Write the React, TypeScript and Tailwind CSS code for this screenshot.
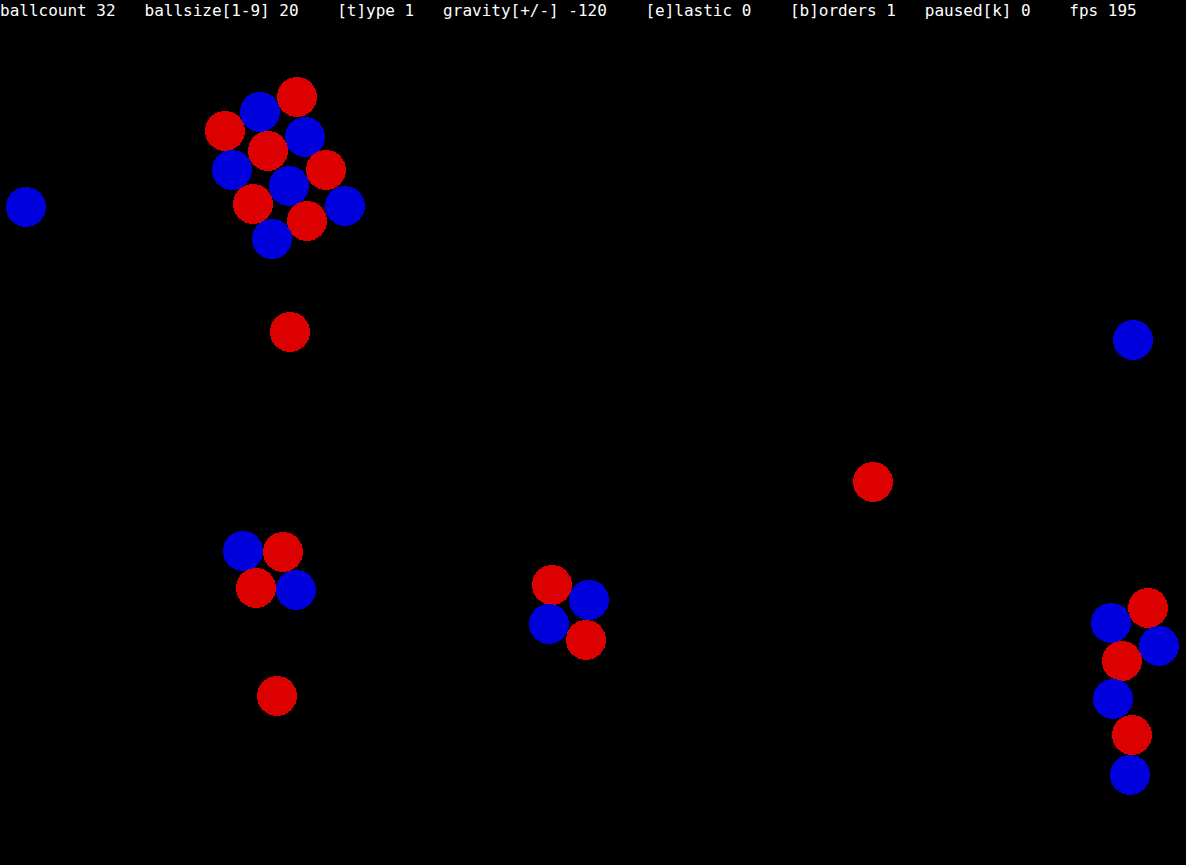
const RED = "#dd0000";
const BLUE = "#0000dd";

type Ball = { x: number; y: number; c: string };

const balls: Ball[] = [
  // top cluster
  { x: 297, y: 97, c: RED },
  { x: 260, y: 112, c: BLUE },
  { x: 225, y: 131, c: RED },
  { x: 305, y: 137, c: BLUE },
  { x: 268, y: 151, c: RED },
  { x: 232, y: 170, c: BLUE },
  { x: 326, y: 170, c: RED },
  { x: 289, y: 186, c: BLUE },
  { x: 253, y: 204, c: RED },
  { x: 345, y: 206, c: BLUE },
  { x: 307, y: 221, c: RED },
  { x: 272, y: 239, c: BLUE },
  // singles
  { x: 26, y: 207, c: BLUE },
  { x: 290, y: 332, c: RED },
  { x: 1133, y: 340, c: BLUE },
  { x: 873, y: 482, c: RED },
  { x: 277, y: 696, c: RED },
  // bottom left
  { x: 243, y: 551, c: BLUE },
  { x: 283, y: 552, c: RED },
  { x: 256, y: 588, c: RED },
  { x: 296, y: 590, c: BLUE },
  // middle
  { x: 552, y: 585, c: RED },
  { x: 589, y: 600, c: BLUE },
  { x: 549, y: 624, c: BLUE },
  { x: 586, y: 640, c: RED },
  // right column
  { x: 1148, y: 608, c: RED },
  { x: 1111, y: 623, c: BLUE },
  { x: 1159, y: 646, c: BLUE },
  { x: 1122, y: 661, c: RED },
  { x: 1113, y: 699, c: BLUE },
  { x: 1132, y: 735, c: RED },
  { x: 1130, y: 775, c: BLUE },
];

// spacing between items in the status line isn't uniform
const statusLine =
  "ballcount 32   " +
  "ballsize[1-9] 20    " +
  "[t]ype 1   " +
  "gravity[+/-] -120    " +
  "[e]lastic 0    " +
  "[b]orders 1   " +
  "paused[k] 0    " +
  "fps 195";

export default function App() {
  return (
    <div className="relative h-[865px] w-[1186px] overflow-hidden bg-black">
      <svg
        className="absolute inset-0"
        width={1186}
        height={865}
        shapeRendering="crispEdges"
      >
        {balls.map((b, i) => (
          <circle key={i} cx={b.x} cy={b.y} r={20} fill={b.c} />
        ))}
      </svg>
      <div className="relative whitespace-pre pt-[1px] font-['DejaVu_Sans_Mono',monospace] text-[16px] leading-[20px] text-white">
        {statusLine}
      </div>
    </div>
  );
}
